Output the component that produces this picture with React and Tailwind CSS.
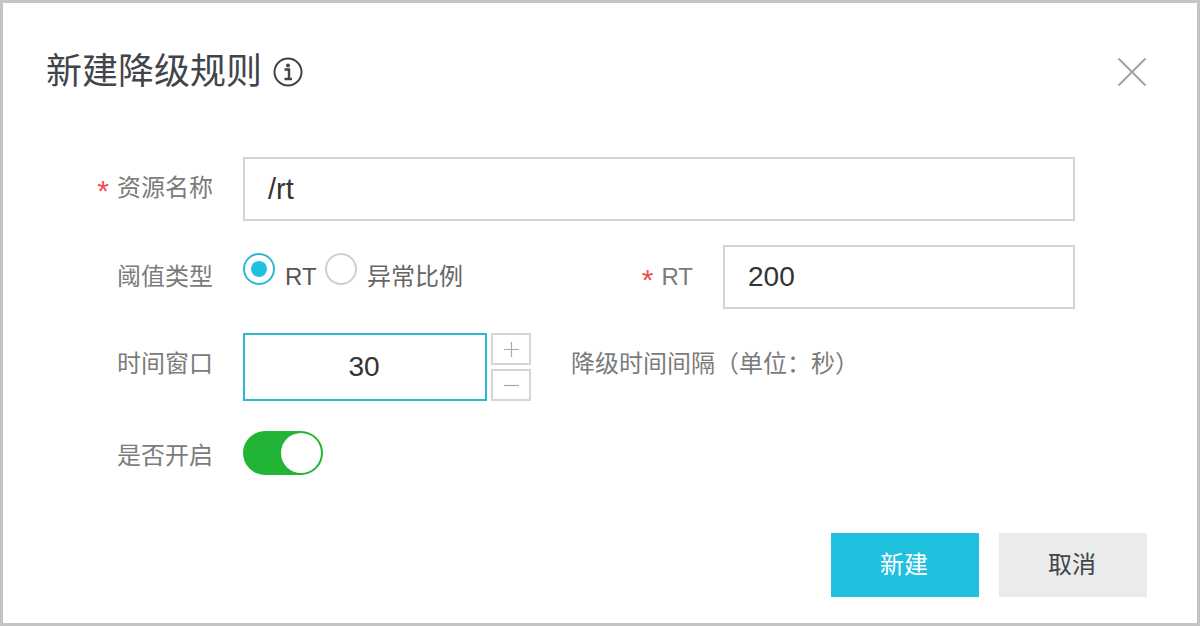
export default function App() {
  return (
    <div className="w-[1200px] h-[626px] overflow-hidden bg-white border-[3px] border-[#c4c4c4] font-['Liberation_Sans','Noto_Sans_CJK_SC',sans-serif]">
      {/* Header */}
      <div className="h-[138px] flex items-center pl-[43px] pr-[49px]">
        <h1 className="text-[36px] leading-none font-normal text-[#41454a]">新建降级规则</h1>
        <svg className="ml-[10px] w-[32px] h-[32px] text-[#41454a]" viewBox="0 0 32 32" fill="none">
          <circle cx="16" cy="16" r="13.500" stroke="currentColor" strokeWidth="2" />
          <circle cx="16" cy="9.500" r="2" fill="currentColor" />
          <path d="M12.500 13.500H17V22.500M12.500 23H20" stroke="currentColor" strokeWidth="2.400" />
        </svg>
        <svg className="ml-auto w-[32px] h-[32px] text-[#a0a2a5]" viewBox="0 0 32 32" fill="none">
          <path d="M2.500 2.500L29.500 29.500M29.500 2.500L2.500 29.500" stroke="currentColor" strokeWidth="2" />
        </svg>
      </div>

      {/* Form */}
      <div className="mt-[16px]">
        <div className="flex">
          <label className="w-[210px] shrink-0 h-[62px] flex items-center justify-end text-[24px] leading-none text-[#7b7b7b]">
            <span className="text-[#ee4d55] text-[30px] mr-[8px] mt-[6px]">*</span>资源名称
          </label>
          <div className="ml-[30px] w-[832px] h-[64px] border-2 border-[#d4d4d4] flex items-center pl-[23px] pt-[2px] text-[29px] text-[#333]">/rt</div>
        </div>

        <div className="flex mt-[24px]">
          <label className="w-[210px] shrink-0 h-[64px] flex items-center justify-end text-[24px] leading-none text-[#7b7b7b]">阈值类型</label>
          <div className="ml-[30px] flex w-[340px] shrink-0 pt-[8px]">
            <span className="w-[32px] h-[32px] rounded-full border-2 border-[#2db7d5] flex items-center justify-center">
              <span className="w-[16px] h-[16px] rounded-full bg-[#20c0df]"></span>
            </span>
            <span className="ml-[10px] w-[30px] mt-[10px] text-[24px] leading-[28px] text-[#555]">RT</span>
            <span className="ml-[10px] w-[32px] h-[32px] rounded-full border-2 border-[#cfcfcf]"></span>
            <span className="ml-[10px] mt-[10px] text-[24px] leading-[28px] text-[#666]">异常比例</span>
          </div>
          <label className="w-[110px] shrink-0 h-[64px] flex items-center justify-end text-[24px] leading-none text-[#7b7b7b]">
            <span className="text-[#ee4d55] text-[30px] mr-[8px] mt-[6px]">*</span>RT
          </label>
          <div className="ml-[30px] w-[352px] h-[64px] border-2 border-[#d4d4d4] flex items-center pl-[23px] text-[28px] text-[#333]">200</div>
        </div>

        <div className="flex mt-[24px]">
          <label className="w-[210px] shrink-0 h-[62px] flex items-center justify-end text-[24px] leading-none text-[#7b7b7b]">时间窗口</label>
          <div className="ml-[30px] w-[244px] h-[68px] border-2 border-[#2db7d5] flex items-center justify-center pr-[2px] text-[28px] text-[#333]">30</div>
          <div className="ml-[4px] flex flex-col gap-[4px]">
            <div className="w-[40px] h-[32px] border-2 border-[#d6d6d6] flex items-center justify-center">
              <svg className="w-[15px] h-[15px] text-[#a8a8a8]" viewBox="0 0 15 15" fill="none">
                <path d="M7.500 0V15M0 7.500H15" stroke="currentColor" strokeWidth="1.200" />
              </svg>
            </div>
            <div className="w-[40px] h-[32px] border-2 border-[#d6d6d6] flex items-center justify-center">
              <svg className="w-[15px] h-[15px] text-[#a8a8a8]" viewBox="0 0 15 15" fill="none">
                <path d="M0 7.500H15" stroke="currentColor" strokeWidth="1.200" />
              </svg>
            </div>
          </div>
          <span className="ml-[40px] h-[62px] flex items-center text-[24px] leading-none text-[#7b7b7b]">降级时间间隔（单位：秒）</span>
        </div>

        <div className="flex mt-[30px]">
          <label className="w-[210px] shrink-0 h-[50px] flex items-center justify-end text-[24px] leading-none text-[#7b7b7b]">是否开启</label>
          <div className="ml-[30px] w-[80px] h-[44px] rounded-full bg-[#22b535] flex items-center justify-end pr-[2px]">
            <span className="w-[40px] h-[40px] rounded-full bg-white"></span>
          </div>
        </div>
      </div>

      {/* Footer */}
      <div className="mt-[52px] flex justify-end gap-[20px] pr-[50px]">
        <button className="w-[148px] h-[64px] bg-[#20c0df] text-white text-[24px] pr-[2px]">新建</button>
        <button className="w-[148px] h-[64px] bg-[#ebebeb] text-[#41454a] text-[24px] pr-[2px]">取消</button>
      </div>
    </div>
  );
}
